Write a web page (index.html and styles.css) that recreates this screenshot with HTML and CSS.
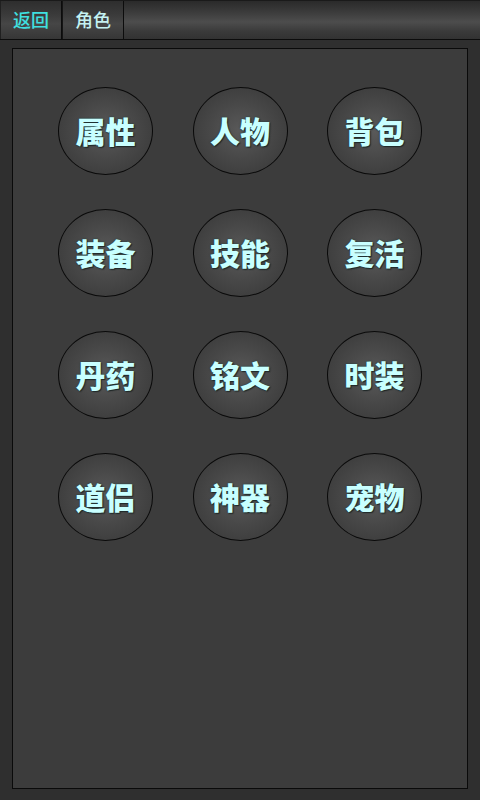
FILE: index.html
```html
<!DOCTYPE html>
<html lang="zh">
<head>
<meta charset="utf-8">
<link rel="stylesheet" href="styles.css">
</head>
<body>
<div class="header">
  <div class="tab back">返回</div>
  <div class="tab title">角色</div>
</div>
<div class="panel">
  <div class="grid">
    <div class="orb">属性</div>
    <div class="orb">人物</div>
    <div class="orb">背包</div>
    <div class="orb">装备</div>
    <div class="orb">技能</div>
    <div class="orb">复活</div>
    <div class="orb">丹药</div>
    <div class="orb">铭文</div>
    <div class="orb">时装</div>
    <div class="orb">道侣</div>
    <div class="orb">神器</div>
    <div class="orb">宠物</div>
  </div>
</div>
</body>
</html>
```
FILE: styles.css
```css
html, body {
  margin: 0;
  padding: 0;
  width: 480px;
  height: 800px;
  background: #2f2f2f;
  font-family: "Noto Sans CJK SC", "Noto Sans", sans-serif;
  overflow: hidden;
}
.header {
  box-sizing: border-box;
  height: 40px;
  border-top: 1px solid #1a1a1a;
  border-bottom: 1px solid #0c0c0c;
  display: flex;
  background: linear-gradient(#2a2a2a 0%, #3c3c3c 30%, #4d4d4d 55%, #3a3a3a 80%, #323232 100%);
}
.tab {
  width: 62px;
  box-sizing: border-box;
  border-right: 1px solid #0c0c0c;
  border-left: 1px solid #202020;
  display: flex;
  align-items: center;
  justify-content: center;
  font-size: 18px;
  font-weight: 500;
  padding-bottom: 2px;
  background: linear-gradient(#2e2e2e 0%, #3a3a3a 35%, #464646 60%, #363636 100%);
}
.tab.back { color: #3fe0e0; }
.tab.title { color: #c4f2f2; border-left: 1px solid #151515; }
.panel {
  margin: 8px 12px 0 12px;
  height: 741px;
  box-sizing: border-box;
  border: 1px solid #0a0a0a;
  background: #3c3c3c;
}
.grid {
  display: grid;
  grid-template-columns: repeat(3, 95px);
  column-gap: 39.5px;
  row-gap: 34px;
  padding: 38px 0 0 45px;
}
.orb {
  width: 95px;
  height: 88px;
  box-sizing: border-box;
  border: 1px solid #0a0a0a;
  border-radius: 50%;
  background: radial-gradient(ellipse at center, #5a5a5a 0%, #484848 45%, #353535 100%);
  display: flex;
  align-items: center;
  justify-content: center;
  color: #c8ffff;
  font-size: 30px;
  font-weight: 900;
  padding-bottom: 2px;
  text-shadow: 0 0 2px #1a3a3a, 1px 1px 1px #222;
}
```
